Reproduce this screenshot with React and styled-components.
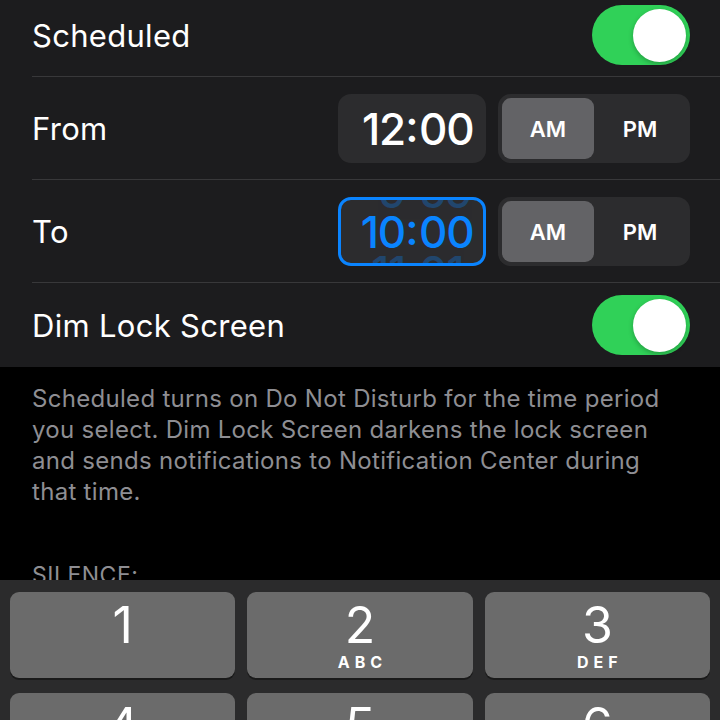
import React from "react";
import styled, { createGlobalStyle } from "styled-components";

const GlobalStyle = createGlobalStyle`
  html, body {
    margin: 0;
    padding: 0;
    background: #000;
  }
  body {
    font-family: Inter, "Noto Sans", sans-serif;
    -webkit-font-smoothing: antialiased;
  }
`;

const Screen = styled.div`
  width: 720px;
  height: 720px;
  overflow: hidden;
  display: flex;
  flex-direction: column;
  background: #000;
`;

const Content = styled.div`
  height: 580px;
  overflow: hidden;
  flex-shrink: 0;
`;

const Group = styled.div`
  background: #1c1c1e;
  margin-top: -7px;
`;

const Row = styled.div`
  height: ${(p) => p.$h}px;
  display: flex;
  align-items: center;
  justify-content: space-between;
  padding: 0 30px 0 32px;
  box-sizing: border-box;
  position: relative;
  &:not(:last-child)::after {
    content: "";
    position: absolute;
    left: 32px;
    right: 0;
    bottom: 0;
    height: 1px;
    background: #38383a;
  }
`;

const Label = styled.div`
  color: #fff;
  font-size: 31px;
  letter-spacing: 0.3px;
`;

const Toggle = styled.div`
  width: 98px;
  height: 60px;
  border-radius: 30px;
  background: #30d158;
  display: flex;
  align-items: center;
  justify-content: flex-end;
  padding: 0 4px;
  box-sizing: border-box;
`;

const Knob = styled.div`
  width: 53px;
  height: 53px;
  border-radius: 50%;
  background: #fff;
  box-shadow: 0 2px 5px rgba(0, 0, 0, 0.25);
`;

const Controls = styled.div`
  display: flex;
  align-items: center;
  gap: 12px;
`;

const TimeBox = styled.div`
  width: 148px;
  height: 69px;
  border-radius: 13px;
  background: #2c2c2e;
  box-sizing: border-box;
  border: ${(p) => (p.$active ? "3px solid #0a84ff" : "none")};
  display: flex;
  flex-direction: column;
  align-items: center;
  justify-content: center;
  overflow: hidden;
`;

const WheelLine = styled.div`
  display: flex;
  align-items: center;
  height: 40px;
  flex-shrink: 0;
  font-size: 44px;
  font-weight: 500;
  letter-spacing: -1.2px;
  color: ${(p) => (p.$active ? "#0a84ff" : "#fff")};
  opacity: ${(p) => (p.$ghost ? 0.3 : 1)};
`;

const Hour = styled.span`
  width: 52px;
  text-align: right;
`;

const Colon = styled.span`
  width: 14px;
  text-align: center;
  visibility: ${(p) => (p.$ghost ? "hidden" : "visible")};
  position: relative;
  top: -3px;
  letter-spacing: 0;
`;

const Minute = styled.span`
  width: 52px;
  text-align: left;
`;

const Segmented = styled.div`
  width: 192px;
  height: 69px;
  border-radius: 13px;
  background: #2c2c2e;
  display: grid;
  grid-template-columns: 1fr 1fr;
  padding: 4px;
  box-sizing: border-box;
`;

const Segment = styled.div`
  display: flex;
  align-items: center;
  justify-content: center;
  border-radius: 9px;
  background: ${(p) => (p.$selected ? "#636366" : "transparent")};
  color: #fff;
  font-size: 22px;
  font-weight: 600;
`;

const Footer = styled.div`
  padding: 16px 32px 0 32px;
  color: #8e8e93;
  font-size: 24px;
  line-height: 31px;
  letter-spacing: 0.3px;
`;

const SectionHeader = styled.div`
  margin-top: 54px;
  padding: 0 32px;
  color: #8e8e93;
  font-size: 23px;
  letter-spacing: 0.5px;
`;

const Keyboard = styled.div`
  flex: 1;
  background: #2b2b2c;
  display: grid;
  grid-template-columns: repeat(3, 1fr);
  column-gap: 12px;
  row-gap: 15px;
  padding: 12px 10px 0 10px;
  align-content: start;
`;

const Key = styled.div`
  height: 86px;
  border-radius: 9px;
  background: #6b6b6b;
  box-shadow: 0 2px 0 #1a1a1a;
  display: flex;
  flex-direction: column;
  align-items: center;
  color: #fff;
`;

const Digit = styled.div`
  font-size: 50px;
  font-weight: 400;
  line-height: 1;
  margin-top: 8px;
`;

const Letters = styled.div`
  font-size: 16px;
  font-weight: 700;
  letter-spacing: 5px;
  margin-top: 2px;
  padding-left: 5px;
`;

const TimeWheel = ({ lines, active }) => (
  <TimeBox $active={active}>
    {lines.map((l, i) => (
      <WheelLine key={i} $active={active} $ghost={l.ghost}>
        <Hour>{l.h}</Hour>
        <Colon $ghost={l.ghost}>:</Colon>
        <Minute>{l.m}</Minute>
      </WheelLine>
    ))}
  </TimeBox>
);

const AmPm = ({ value }) => (
  <Segmented>
    <Segment $selected={value === "AM"}>AM</Segment>
    <Segment $selected={value === "PM"}>PM</Segment>
  </Segmented>
);

const keys = [
  ["1", ""],
  ["2", "ABC"],
  ["3", "DEF"],
  ["4", "GHI"],
  ["5", "JKL"],
  ["6", "MNO"],
];

export default function App() {
  return (
    <>
      <GlobalStyle />
      <Screen>
        <Content>
          <Group>
            <Row $h={84}>
              <Label>Scheduled</Label>
              <Toggle>
                <Knob />
              </Toggle>
            </Row>
            <Row $h={103}>
              <Label>From</Label>
              <Controls>
                <TimeWheel lines={[{ h: "12", m: "00" }]} />
                <AmPm value="AM" />
              </Controls>
            </Row>
            <Row $h={103}>
              <Label>To</Label>
              <Controls>
                <TimeWheel
                  active
                  lines={[
                    { h: "9", m: "59", ghost: true },
                    { h: "10", m: "00" },
                    { h: "11", m: "01", ghost: true },
                  ]}
                />
                <AmPm value="AM" />
              </Controls>
            </Row>
            <Row $h={84}>
              <Label>Dim Lock Screen</Label>
              <Toggle>
                <Knob />
              </Toggle>
            </Row>
          </Group>
          <Footer>
            Scheduled turns on Do Not Disturb for the time period you select.
            Dim Lock Screen darkens the lock screen and sends notifications to
            Notification Center during that time.
          </Footer>
          <SectionHeader>SILENCE:</SectionHeader>
        </Content>
        <Keyboard>
          {keys.map(([d, l]) => (
            <Key key={d}>
              <Digit>{d}</Digit>
              {l && <Letters>{l}</Letters>}
            </Key>
          ))}
        </Keyboard>
      </Screen>
    </>
  );
}
